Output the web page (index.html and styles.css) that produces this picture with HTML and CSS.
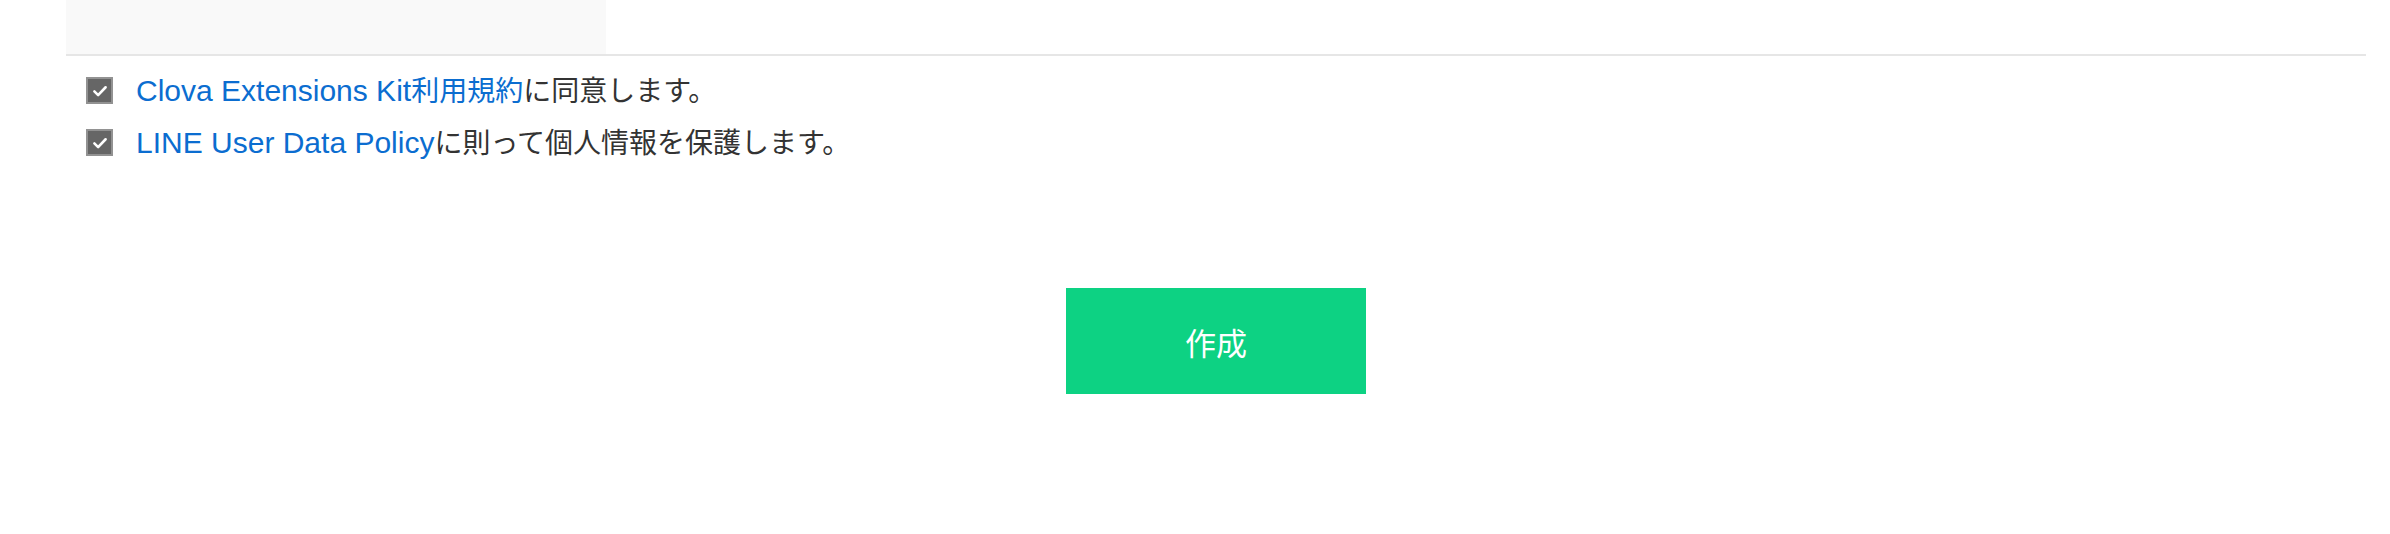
FILE: index.html
```html
<!DOCTYPE html>
<html lang="ja">
<head>
<meta charset="utf-8">
<title>作成</title>
<link rel="stylesheet" href="styles.css">
</head>
<body>
<div class="container">
  <div class="top-row">
    <div class="panel"></div>
  </div>
  <div class="agreements">
    <label class="agree-row">
      <span class="checkbox"><svg viewBox="0 0 24 24" width="18" height="18"><path d="M4.5 12.5 L9.5 17.5 L19.5 7" fill="none" stroke="#fff" stroke-width="3.4" stroke-linecap="round" stroke-linejoin="round"/></svg></span>
      <span class="agree-text"><a class="link" href="#"><span class="en">Clova Extensions Kit</span>利用規約</a>に同意します。</span>
    </label>
    <label class="agree-row">
      <span class="checkbox"><svg viewBox="0 0 24 24" width="18" height="18"><path d="M4.5 12.5 L9.5 17.5 L19.5 7" fill="none" stroke="#fff" stroke-width="3.4" stroke-linecap="round" stroke-linejoin="round"/></svg></span>
      <span class="agree-text"><a class="link" href="#"><span class="en">LINE User Data Policy</span></a>に則って個人情報を保護します。</span>
    </label>
  </div>
  <div class="actions">
    <button class="create-btn" type="button">作成</button>
  </div>
</div>
</body>
</html>
```

FILE: styles.css
```css
html, body {
  margin: 0;
  padding: 0;
  background: #ffffff;
}

body {
  font-family: "Liberation Sans", "Noto Sans CJK JP", sans-serif;
  color: #333333;
}

.container {
  margin-left: 66px;
  width: 2300px;
}

.top-row {
  height: 54px;
  border-bottom: 2px solid #e6e6e6;
}

.panel {
  width: 540px;
  height: 54px;
  background: #f9f9f9;
}

.agreements {
  display: flex;
  flex-direction: column;
  padding: 9px 0 0 20px;
}

.agree-row {
  display: flex;
  align-items: center;
  gap: 23px;
  height: 52px;
}

.checkbox {
  box-sizing: border-box;
  width: 27px;
  height: 27px;
  flex: none;
  display: flex;
  align-items: center;
  justify-content: center;
  background: #666666;
  border: 2px solid #929292;
  margin-top: -1px;
}

.checkbox svg {
  display: block;
}

.agree-text {
  font-size: 28px;
  line-height: 52px;
  white-space: nowrap;
  color: #333333;
}

.link {
  color: #0b6dd0;
  text-decoration: none;
}

.en {
  font-size: 30px;
}

.actions {
  display: flex;
  justify-content: center;
  padding-top: 119px;
}

.create-btn {
  width: 300px;
  height: 106px;
  border: none;
  background: #0dd283;
  color: #ffffff;
  font-family: "Noto Sans CJK JP", sans-serif;
  font-size: 31px;
  font-weight: 400;
  padding: 0;
  cursor: pointer;
}
```
